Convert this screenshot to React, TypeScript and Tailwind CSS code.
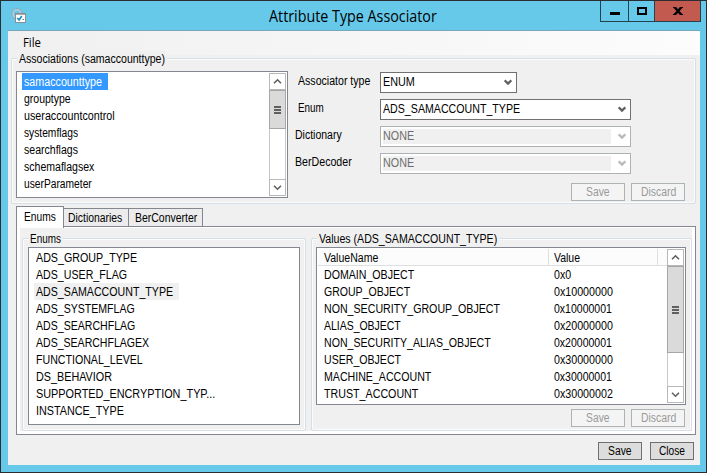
import { useLayoutEffect, useRef, useState, type ReactNode } from 'react';

const UI = "font-['Liberation_Sans',sans-serif]";
const SEGOE = "font-['Open_Sans','Noto_Sans',sans-serif]";

// Single-line text condensed to a given width.
function Txt({ w, children, className = '' }: { w: number; children: ReactNode; className?: string }) {
  const ref = useRef<HTMLSpanElement>(null);
  const [scale, setScale] = useState(0.9);
  useLayoutEffect(() => {
    if (ref.current) setScale(w / ref.current.offsetWidth);
  }, [w]);
  return (
    <span className={`block shrink-0 whitespace-nowrap ${className}`} style={{ width: w }}>
      <span ref={ref} className="inline-block origin-left" style={{ transform: `scaleX(${scale})` }}>
        {children}
      </span>
    </span>
  );
}

function GroupBox({ title, w, className, children }: { title: string; w: number; className: string; children: ReactNode }) {
  return (
    <div className={`relative rounded-[2px] border border-[#d5dfe5] shadow-[inset_0_0_0_1px_#fcfcfc] ${className}`}>
      <div className="absolute -top-[8px] left-[5px] h-[16px] bg-[#f0f0f0] px-[2px] leading-[17px]">
        <Txt w={w}>{title}</Txt>
      </div>
      {children}
    </div>
  );
}

function Arrow({ up = false }: { up?: boolean }) {
  return (
    <div className="flex h-[17px] w-[17px] shrink-0 items-center justify-center border border-[#b8b8b8] bg-white">
      <svg width="9" height="7" viewBox="0 0 9 7" fill="none" stroke="#606060" strokeWidth="1.6">
        <path d={up ? 'M1 5.3L4.5 1.8L8 5.3' : 'M1 1.7L4.5 5.2L8 1.7'} />
      </svg>
    </div>
  );
}

function ScrollBar({ thumb }: { thumb: string }) {
  return (
    <div className="flex w-[17px] shrink-0 flex-col border-x border-[#c8c8c8] bg-white">
      <div className="-mx-px"><Arrow up /></div>
      <div className={`-mx-px flex flex-col items-center justify-center gap-px border border-[#a6a6a6] bg-[#dadada] ${thumb}`}>
        <i className="h-[2px] w-[7px] bg-[#606060]" />
        <i className="h-[2px] w-[7px] bg-[#606060]" />
        <i className="h-[2px] w-[7px] bg-[#606060]" />
      </div>
      <div className="-mx-px mt-auto"><Arrow /></div>
    </div>
  );
}

function Combo({ value, w, width, disabled = false }: { value: string; w: number; width: string; disabled?: boolean }) {
  return (
    <div className={`flex h-[21px] items-center border bg-white ${width} ${disabled ? 'border-[#adb2b5] text-[#6d6d6d]' : 'border-[#707070]'}`}>
      <div className={`ml-[2px] h-[15px] flex-1 leading-[15px] ${disabled ? 'bg-[#f0f0f0]' : ''}`}>
        <Txt w={w}>{value}</Txt>
      </div>
      <svg className="mr-1 ml-[7px]" width="8" height="7" viewBox="0 0 8 7" fill="none" stroke={disabled ? '#b9b9b9' : '#606060'} strokeWidth="2.2">
        <path d="M0.7 1.3L4 4.6L7.3 1.3" />
      </svg>
    </div>
  );
}

function Button({ label, w, width, disabled = false }: { label: string; w: number; width: string; disabled?: boolean }) {
  return (
    <button className={`flex h-[18px] items-center justify-center border leading-[16px] ${width} ${disabled ? 'border-[#adb2b5] bg-[#f4f4f4] text-[#9a9a9a]' : 'border-[#707070] bg-[#dddddd]'}`}>
      <Txt w={w} className="text-left">{label}</Txt>
    </button>
  );
}

function Actions({ className }: { className: string }) {
  return (
    <div className={`flex gap-[6px] ${className}`}>
      <Button label="Save" w={24} width="w-[54px]" disabled />
      <Button label="Discard" w={35} width="w-[54px]" disabled />
    </div>
  );
}

const attributes: [string, number][] = [
  ['samaccounttype', 78], ['grouptype', 47], ['useraccountcontrol', 91], ['systemflags', 54],
  ['searchflags', 54], ['schemaflagsex', 70], ['userParameter', 68],
];

const enums: [string, number][] = [
  ['ADS_GROUP_TYPE', 101], ['ADS_USER_FLAG', 91], ['ADS_SAMACCOUNT_TYPE', 137], ['ADS_SYSTEMFLAG', 99],
  ['ADS_SEARCHFLAG', 99], ['ADS_SEARCHFLAGEX', 113], ['FUNCTIONAL_LEVEL', 107], ['DS_BEHAVIOR', 76],
  ['SUPPORTED_ENCRYPTION_TYP...', 179], ['INSTANCE_TYPE', 88],
];

const values: [string, number, string, number][] = [
  ['DOMAIN_OBJECT', 90, '0x0', 17], ['GROUP_OBJECT', 86, '0x10000000', 59],
  ['NON_SECURITY_GROUP_OBJECT', 176, '0x10000001', 58], ['ALIAS_OBJECT', 77, '0x20000000', 59],
  ['NON_SECURITY_ALIAS_OBJECT', 167, '0x20000001', 58], ['USER_OBJECT', 77, '0x30000000', 59],
  ['MACHINE_ACCOUNT', 107, '0x30000001', 58], ['TRUST_ACCOUNT', 94, '0x30000002', 59],
];

function TitleBar() {
  return (
    <header className="flex h-[29px] items-start">
      <svg className="mt-[6px] ml-[10px]" width="16" height="17" viewBox="0 0 16 17">
        <circle cx="6" cy="6.8" r="4.6" fill="none" stroke="#8fa9b8" strokeWidth="2.4" strokeDasharray="2 0.9" />
        <circle cx="6" cy="6.8" r="3.9" fill="none" stroke="#c3d3dc" strokeWidth="1.2" />
        <rect x="4.5" y="6.5" width="10" height="9" fill="#fff" stroke="#8a8f94" />
        <path d="M5 7.5h9" stroke="#a9aeb2" />
        <path d="M6.3 11l1.8 2 2.7-4" fill="none" stroke="#168bc2" strokeWidth="1.6" />
        <path d="M11.5 12.5h1.5" stroke="#777" />
      </svg>
      <h1 className={`ml-[242px] h-[28px] text-[16px] leading-[30px] ${SEGOE}`}><Txt w={168}>Attribute Type Associator</Txt></h1>
      <div className="mr-[5px] ml-auto flex h-[21px] border-x border-b border-[#24424e]">
        <div className="flex w-[28px] items-center justify-center border-r border-[#24424e]"><i className="mt-[4px] h-[3px] w-[10px] bg-black" /></div>
        <div className="flex w-[26px] items-center justify-center border-r border-[#24424e]"><i className="h-[8px] w-[10px] border-2 border-black" /></div>
        <div className="flex w-[45px] items-center justify-center bg-[#c35a50]">
          <svg width="10" height="8" viewBox="0 0 10 8" stroke="#000" strokeWidth="2.4"><path d="M1.5 0L8.5 8M8.5 0L1.5 8" /><path d="M0 .5h3M7 .5h3M0 7.5h3M7 7.5h3" strokeWidth="1" /></svg>
        </div>
      </div>
    </header>
  );
}

function Associations() {
  return (
    <GroupBox title="Associations (samaccounttype)" w={146} className="mt-[3px] ml-[3px] flex h-[146px] w-[685px]">
      <div className="mt-[12px] ml-[4px] flex h-[127px] w-[272px] shrink-0 justify-between border border-[#828790] bg-white py-px pr-px pl-[5px]">
        <ul>
          {attributes.map(([name, w], i) => (
            <li key={name} className={`h-[17px] w-max pr-[6px] pl-[2px] leading-[18px] ${i === 0 ? 'bg-[#3399ff] text-white' : ''}`}><Txt w={w}>{name}</Txt></li>
          ))}
        </ul>
        <ScrollBar thumb="h-[39px]" />
      </div>
      <div className="mt-[13px] ml-[7px] flex w-[85px] shrink-0 flex-col gap-[6px] leading-[19px]">
        <div className="h-[21px] pl-[3px]"><Txt w={72}>Associator type</Txt></div>
        <div className="h-[21px] pl-[3px]"><Txt w={26}>Enum</Txt></div>
        <div className="h-[21px]"><Txt w={47}>Dictionary</Txt></div>
        <div className="h-[21px]"><Txt w={57}>BerDecoder</Txt></div>
      </div>
      <div className="mt-[13px] flex w-[305px] flex-col gap-[6px]">
        <Combo value="ENUM" w={32} width="w-[137px]" />
        <Combo value="ADS_SAMACCOUNT_TYPE" w={137} width="w-[251px]" />
        <Combo value="NONE" w={31} width="w-[251px]" disabled />
        <Combo value="NONE" w={31} width="w-[251px]" disabled />
        <Actions className="mt-[3px] justify-end" />
      </div>
    </GroupBox>
  );
}

function Tabs() {
  return (
    <div className="relative z-10 mt-[2px] ml-[8px] flex h-[21px] items-end">
      <div className="-mb-px h-[22px] w-[48px] border border-b-0 border-[#828790] bg-white pl-[7px] leading-[20px]"><Txt w={32}>Enums</Txt></div>
      <div className="h-[19px] w-[65px] border border-l-0 border-[#828790] bg-[#ececec] pl-[4px] leading-[19px]"><Txt w={54}>Dictionaries</Txt></div>
      <div className="h-[19px] w-[74px] border border-l-0 border-[#828790] bg-[#ececec] pl-[6px] leading-[19px]"><Txt w={62}>BerConverter</Txt></div>
    </div>
  );
}

function EnumList() {
  return (
    <GroupBox title="Enums" w={31} className="h-[193px] w-[284px]">
      <div className="mt-[8px] ml-[5px] h-[178px] w-[272px] border border-[#828790] bg-white pt-px pl-[5px]">
        {enums.map(([name, w], i) => (
          <div key={name} className={`h-[17px] w-max pr-[6px] pl-[2px] leading-[18px] ${i === 2 ? 'bg-[#f0f0f0]' : ''}`}><Txt w={w}>{name}</Txt></div>
        ))}
      </div>
    </GroupBox>
  );
}

function ValueTable() {
  return (
    <GroupBox title="Values (ADS_SAMACCOUNT_TYPE)" w={178} className="h-[193px] w-[381px]">
      <div className="mt-[8px] ml-[4px] flex h-[158px] w-[370px] border border-[#828790] bg-white p-px">
        <div className="flex-1">
          <div className="flex h-[17px] border-b border-[#dedfe1] bg-[#fcfcfc] leading-[18px]">
            <div className="w-[231px] border-r border-[#dedfe1] pl-[6px]"><Txt w={54}>ValueName</Txt></div>
            <div className="w-[109px] border-r border-[#dedfe1] pl-[5px]"><Txt w={26}>Value</Txt></div>
          </div>
          {values.map(([name, w, value, vw]) => (
            <div key={name} className="flex h-[17px] pl-[6px] leading-[18px]">
              <div className="w-[230px]"><Txt w={w}>{name}</Txt></div>
              <Txt w={vw}>{value}</Txt>
            </div>
          ))}
        </div>
        <ScrollBar thumb="h-[87px]" />
      </div>
      <Actions className="mt-[4px] mr-[6px] justify-end" />
    </GroupBox>
  );
}

export default function App() {
  return (
    <div className={`h-[473px] w-[707px] overflow-hidden border border-[#2b2d33] bg-[#66c9ea] text-[12.5px] text-black ${UI}`}>
      <TitleBar />
      <main className="ml-[7px] h-[435px] w-[692px] border-t border-[#75a8bd] bg-[#f0f0f0]">
        <nav className={`h-[24px] bg-linear-to-r from-[#f0f0f0] to-[#fcfcfc] pl-[15px] text-[12px] leading-[24px] ${SEGOE}`}><Txt w={18}>File</Txt></nav>
        <Associations />
        <Tabs />
        <section className="-mt-px ml-[8px] flex h-[209px] w-[680px] border border-[#828790] bg-white px-[3px] pt-px pb-[3px]">
          <div className="flex w-full gap-[5px] bg-[#f0f0f0] pt-[10px] pl-[2px]">
            <EnumList />
            <ValueTable />
          </div>
        </section>
        <footer className="mt-[7px] mr-[6px] flex justify-end gap-[8px]">
          <Button label="Save" w={24} width="w-[44px]" />
          <Button label="Close" w={26} width="w-[44px]" />
        </footer>
      </main>
    </div>
  );
}
